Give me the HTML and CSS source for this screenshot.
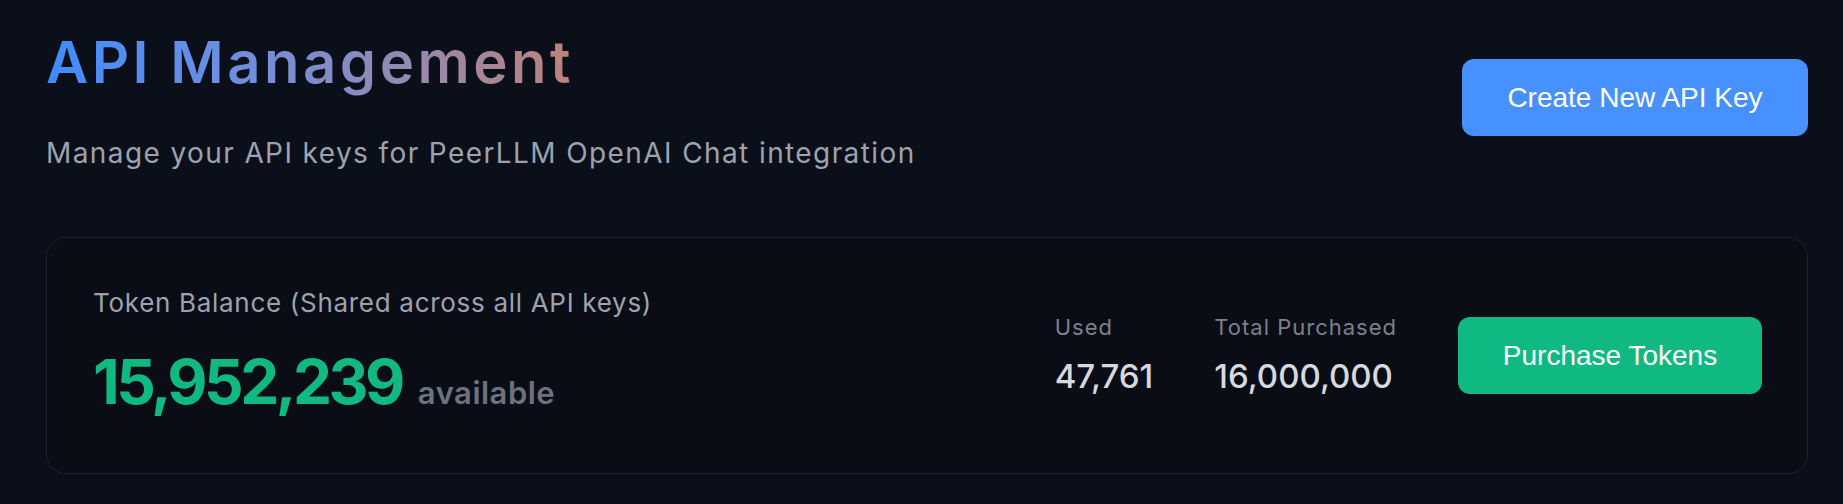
FILE: index.html
```html
<!DOCTYPE html>
<html lang="en">
<head>
<meta charset="utf-8">
<title>API Management</title>
<link rel="stylesheet" href="styles.css">
</head>
<body>
<main class="page">
  <header class="header">
    <div class="header-text">
      <h1 class="title">API Management</h1>
      <p class="subtitle">Manage your API keys for PeerLLM OpenAI Chat integration</p>
    </div>
    <button class="btn btn-blue">Create New API Key</button>
  </header>

  <section class="card">
    <div class="balance">
      <div class="balance-label">Token Balance (Shared across all API keys)</div>
      <div class="balance-row">
        <span class="balance-value">15,952,239</span>
        <span class="balance-unit">available</span>
      </div>
    </div>
    <div class="side">
      <div class="stat">
        <div class="stat-label">Used</div>
        <div class="stat-value">47,761</div>
      </div>
      <div class="stat">
        <div class="stat-label">Total Purchased</div>
        <div class="stat-value">16,000,000</div>
      </div>
      <button class="btn btn-green">Purchase Tokens</button>
    </div>
  </section>
</main>
</body>
</html>
```

FILE: styles.css
```css
* { box-sizing: border-box; }

html, body {
  margin: 0;
  background: #0b0f19;
}

body {
  font-family: Inter, "Open Sans", sans-serif;
  color: #e5e7eb;
}

.page {
  padding: 29px 35px 30px 46px;
}

.header {
  display: flex;
  justify-content: space-between;
  align-items: flex-start;
}

.title {
  margin: 0;
  font-size: 58px;
  line-height: 67px;
  font-weight: 600;
  letter-spacing: 3.5px;
  background: linear-gradient(90deg, #3f8cff 0%, #6d8ee0 35%, #8f8bb6 65%, #bd8279 100%);
  -webkit-background-clip: text;
  background-clip: text;
  color: transparent;
  display: inline-block;
}

.subtitle {
  margin: 40px 0 0;
  font-size: 28px;
  line-height: 34px;
  letter-spacing: 1.4px;
  color: #9ca3af;
  font-weight: 400;
}

.btn {
  border: none;
  color: #ffffff;
  font-family: "Liberation Sans", Arial, sans-serif;
  font-size: 28px;
  line-height: 33px;
  padding: 22px 0;
  border-radius: 12px;
  white-space: nowrap;
  text-align: center;
  cursor: pointer;
}

.btn-blue {
  background: #4690ff;
  margin-top: 30px;
  width: 346px;
}

.btn-green {
  background: #10b981;
  width: 304px;
}

.card {
  margin-top: 67px;
  border: 1px solid #1d2230;
  border-radius: 20px;
  background: #0a0d15;
  height: 237px;
  padding: 0 45px 0 46px;
  display: flex;
  justify-content: space-between;
  align-items: center;
}

.balance {
  padding-bottom: 7px;
}

.balance-label {
  font-size: 26px;
  line-height: 32px;
  letter-spacing: 0.7px;
  color: #9ca3af;
}

.balance-row {
  margin-top: 27px;
  display: flex;
  align-items: baseline;
  gap: 16px;
}

.balance-value {
  font-size: 62px;
  line-height: 72px;
  font-weight: 700;
  letter-spacing: -3.5px;
  color: #10b981;
}

.balance-unit {
  font-size: 31px;
  font-weight: 600;
  letter-spacing: 0.5px;
  color: #6b7280;
}

.side {
  display: flex;
  align-items: center;
  gap: 61px;
}

.stat-label {
  font-size: 22px;
  line-height: 20px;
  letter-spacing: 1px;
  color: #7c808b;
}

.stat-value {
  margin-top: 20px;
  font-size: 33px;
  line-height: 38px;
  font-weight: 500;
  color: #d6d9df;
}
```
